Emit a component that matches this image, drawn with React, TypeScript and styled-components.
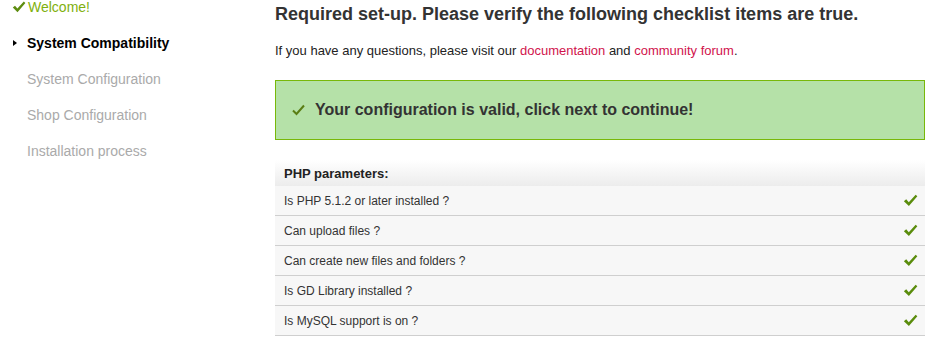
import React from "react";
import styled, { createGlobalStyle } from "styled-components";

const Global = createGlobalStyle`
  html, body { margin: 0; padding: 0; background: #fff; }
  body { font-family: "Liberation Sans", Arial, sans-serif; overflow: hidden; }
`;

const Page = styled.div`
  display: flex;
  width: 933px;
  height: 350px;
  overflow: hidden;
`;

const Sidebar = styled.ul`
  list-style: none;
  margin: -11px 0 0 0;
  padding: 0 0 0 12px;
  width: 263px;
  flex: none;
`;

const Step = styled.li<{ $state: "done" | "current" | "todo" }>`
  display: flex;
  align-items: center;
  height: 36px;
  font-size: 14px;
  font-weight: ${(p) => (p.$state === "current" ? 700 : 400)};
  color: ${(p) =>
    p.$state === "done" ? "#7fb00e" : p.$state === "current" ? "#000" : "#aaa"};
  padding-left: ${(p) => (p.$state === "done" ? "0" : "15px")};
  position: relative;
`;

const Arrow = styled.span`
  position: absolute;
  left: 1px;
  top: 50%;
  margin-top: -3px;
  width: 0;
  height: 0;
  border-top: 3px solid transparent;
  border-bottom: 3px solid transparent;
  border-left: 4px solid #000;
`;

const Main = styled.div`
  width: 650px;
  flex: none;
`;

const Title = styled.h2`
  margin: 3px 0 0 0;
  font-size: 18px;
  line-height: 22px;
  font-weight: 700;
  color: #333;
`;

const Intro = styled.p`
  margin: 18px 0 0 0;
  font-size: 13px;
  line-height: 16px;
  color: #222;
`;

const Link = styled.a`
  color: #d1134c;
  text-decoration: none;
`;

const Valid = styled.div`
  margin-top: 21px;
  height: 58px;
  box-sizing: content-box;
  border: 1px solid #78b80a;
  background: #b5e1a8;
  display: flex;
  align-items: center;
  padding-left: 16px;
  gap: 10px;
  font-size: 16px;
  font-weight: 700;
  color: #333;
`;

const Table = styled.div`
  margin-top: 20px;
  display: flex;
  flex-direction: column;
`;

const Header = styled.div`
  height: 26px;
  display: flex;
  align-items: center;
  padding-left: 9px;
  font-size: 13px;
  font-weight: 700;
  color: #222;
  background: linear-gradient(to bottom, #ffffff 0%, #ececec 100%);
`;

const Row = styled.div`
  height: 29px;
  border-bottom: 1px solid #cfcfcf;
  background: #f7f7f7;
  display: flex;
  align-items: center;
  justify-content: space-between;
  padding: 0 7px 0 9px;
  font-size: 12px;
  color: #333;
`;

const Check = ({ size = 14, color = "#5a8c0c" }: { size?: number; color?: string }) => (
  <svg width={size} height={size} viewBox="0 0 14 14">
    <path
      d="M0.8 7.6 L3 5.8 L5.4 8.6 L11.8 1.6 L13.4 3 L5.5 12.2 Z"
      fill={color}
    />
  </svg>
);

const ThinCheck = () => (
  <svg width="13" height="12" viewBox="0 0 13 12">
    <path d="M1 6.5 L4.5 10 L12 1.5" stroke="#5a7d14" strokeWidth="2" fill="none" />
  </svg>
);

const WelcomeIcon = styled.span`
  display: inline-flex;
  margin-right: 2px;
`;

const items = [
  "Is PHP 5.1.2 or later installed ?",
  "Can upload files ?",
  "Can create new files and folders ?",
  "Is GD Library installed ?",
  "Is MySQL support is on ?",
];

export default function App() {
  return (
    <>
      <Global />
      <Page>
        <Sidebar>
          <Step $state="done">
            <WelcomeIcon>
              <Check size={14} color="#5e8d10" />
            </WelcomeIcon>
            Welcome!
          </Step>
          <Step $state="current">
            <Arrow />
            System Compatibility
          </Step>
          <Step $state="todo">System Configuration</Step>
          <Step $state="todo">Shop Configuration</Step>
          <Step $state="todo">Installation process</Step>
        </Sidebar>
        <Main>
          <Title>Required set-up. Please verify the following checklist items are true.</Title>
          <Intro>
            If you have any questions, please visit our <Link href="#">documentation</Link> and{" "}
            <Link href="#">community forum</Link>.
          </Intro>
          <Valid>
            <ThinCheck />
            Your configuration is valid, click next to continue!
          </Valid>
          <Table>
            <Header>PHP parameters:</Header>
            {items.map((t) => (
              <Row key={t}>
                <span>{t}</span>
                <Check size={15} />
              </Row>
            ))}
          </Table>
        </Main>
      </Page>
    </>
  );
}
